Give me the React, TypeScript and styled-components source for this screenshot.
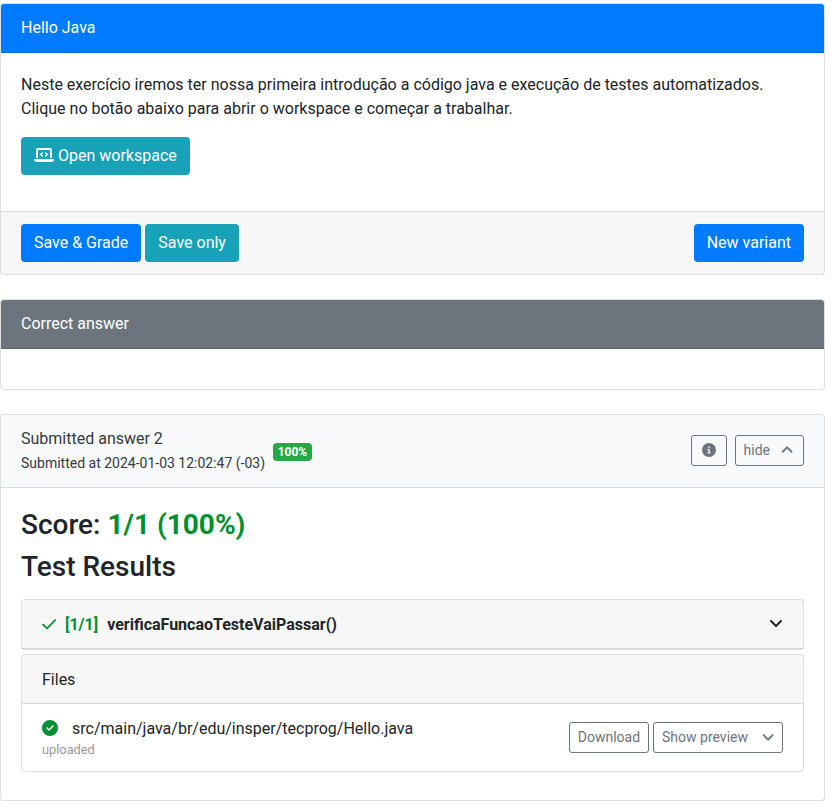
import React from "react";
import styled, { createGlobalStyle } from "styled-components";
import {
  FaAngleDown,
  FaAngleUp,
  FaCircleCheck,
  FaCircleInfo,
  FaLaptopCode,
} from "react-icons/fa6";

const GlobalStyle = createGlobalStyle`
  *, *::before, *::after { box-sizing: border-box; }
  body {
    margin: 0;
    background: #fff;
    color: #212529;
    font: 400 16px/24px Roboto, "Liberation Sans", sans-serif;
  }
`;

const Page = styled.main`
  display: flex;
  flex-direction: column;
  gap: 24px;
  width: 825px;
  padding-top: 3px;
`;

const Card = styled.section`
  border: 1px solid rgba(0, 0, 0, 0.125);
  border-radius: 4px;
  background: #fff;
  background-clip: border-box;
`;

type Tone = "primary" | "secondary" | "light" | "plain";

const headerColors: Record<Tone, { bg: string; fg: string }> = {
  primary: { bg: "#007bff", fg: "#fff" },
  secondary: { bg: "#6c757d", fg: "#fff" },
  light: { bg: "#f8f9fa", fg: "#343a40" },
  plain: { bg: "rgba(0, 0, 0, 0.03)", fg: "#212529" },
};

const CardHeader = styled.header<{ $tone: Tone }>`
  display: flex;
  align-items: center;
  padding: 12px 20px;
  border-bottom: 1px solid rgba(0, 0, 0, 0.125);
  border-radius: 3px 3px 0 0;
  background-color: ${(p) => headerColors[p.$tone].bg};
  color: ${(p) => headerColors[p.$tone].fg};
`;

const PanelHeader = styled(CardHeader)`
  padding: 13px 20px 11px;
`;

const QuestionBody = styled.div`
  padding: 20px 20px 36px;
`;

const Paragraph = styled.p`
  margin: 0 0 16px;
`;

const CardFooter = styled.footer`
  display: flex;
  gap: 4px;
  padding: 12px 20px;
  border-top: 1px solid rgba(0, 0, 0, 0.125);
  background: rgba(0, 0, 0, 0.03);
`;

const Button = styled.button<{ $color: string; $end?: boolean }>`
  display: inline-flex;
  align-items: center;
  gap: 4px;
  height: 38px;
  margin: 0 0 0 ${(p) => (p.$end ? "auto" : "0")};
  padding: 0 13px;
  border: 0;
  border-radius: 4px;
  background: ${(p) => p.$color};
  color: #fff;
  font: inherit;
  white-space: nowrap;
`;

const WorkspaceIcon = styled(FaLaptopCode)`
  width: 20px;
  height: 16px;
  margin-bottom: 2px;
`;

const EmptyBody = styled.div`
  height: 40px;
`;

const Submission = styled.div`
  display: flex;
  flex-direction: column;
`;

const Timestamp = styled.span`
  font-size: 14px;
`;

const Badge = styled.span`
  margin: 2px 0 0 8px;
  padding: 3px 4.6px;
  border-radius: 4px;
  background: #28a745;
  color: #fff;
  font-size: 12px;
  font-weight: 700;
  line-height: 12px;
`;

const Actions = styled.div<{ $gap: number }>`
  display: flex;
  gap: ${(p) => p.$gap}px;
  margin-left: auto;
`;

const HeaderActions = styled(Actions)`
  margin-bottom: 1px;
`;

const OutlineButton = styled.button<{ $gap?: number; $padding?: number; $end?: number }>`
  display: inline-flex;
  align-items: center;
  justify-content: center;
  gap: ${(p) => p.$gap ?? 0}px;
  height: 31px;
  padding: 0 ${(p) => p.$padding ?? 8}px;
  padding-right: ${(p) => p.$end ?? p.$padding ?? 8}px;
  border: 1px solid #6c757d;
  border-radius: 3px;
  background: transparent;
  color: #6c757d;
  font: 400 14px/21px Roboto, "Liberation Sans", sans-serif;
  white-space: nowrap;
`;

const InfoIcon = styled(FaCircleInfo)`
  width: 14px;
  height: 14px;
  margin-bottom: 1px;
`;

const CollapseIcon = styled(FaAngleUp)`
  width: 12.25px;
  height: 14px;
  margin-bottom: 1px;
  stroke-width: 12px;
`;

const PreviewIcon = styled(FaAngleDown)`
  width: 12.25px;
  height: 14px;
  margin-bottom: 2px;
  stroke-width: 12px;
`;

const ResultsBody = styled.div`
  padding: 20px 20px 27.8px;
`;

const Heading = styled.h2<{ $after: number }>`
  margin: 0 0 ${(p) => p.$after}px;
  font-size: 28px;
  font-weight: 500;
  line-height: 33.6px;
`;

const Points = styled.span`
  color: #009030;
  font-weight: 700;
`;

const Panel = styled(Card)`
  & + & {
    margin-top: 4px;
  }
`;

const TestName = styled.strong`
  margin-left: 9px;
  font-weight: 700;
`;

const TestPoints = styled(TestName)`
  color: #009030;
`;

const PassIcon = styled.svg`
  width: 14px;
  height: 16px;
  margin-bottom: 2px;
  color: #009030;
`;

const ExpandIcon = styled(FaAngleDown)`
  width: 14px;
  height: 16px;
  margin: 0 0 4px auto;
`;

const FileRow = styled.div`
  display: flex;
  align-items: center;
  padding: 12px 20px;
`;

const FileName = styled.div`
  display: flex;
  align-items: center;
  gap: 14px;
  margin-bottom: -1px;
  padding-top: 1px;
`;

const UploadedIcon = styled(FaCircleCheck)`
  width: 16px;
  height: 16px;
  margin-bottom: 2px;
  color: #009030;
`;

const FileStatus = styled.div`
  color: #999;
  font-size: 12.8px;
  line-height: 19px;
`;

export default function App() {
  return (
    <>
      <GlobalStyle />
      <Page>
        <Card>
          <CardHeader $tone="primary">Hello Java</CardHeader>
          <QuestionBody>
            <Paragraph>
              Neste exercício iremos ter nossa primeira introdução a código java e execução de
              testes automatizados. Clique no botão abaixo para abrir o workspace e começar a
              trabalhar.
            </Paragraph>
            <Button $color="#17a2b8">
              <WorkspaceIcon />
              Open workspace
            </Button>
          </QuestionBody>
          <CardFooter>
            <Button $color="#007bff">Save &amp; Grade</Button>
            <Button $color="#17a2b8">Save only</Button>
            <Button $color="#007bff" $end>
              New variant
            </Button>
          </CardFooter>
        </Card>

        <Card>
          <CardHeader $tone="secondary">Correct answer</CardHeader>
          <EmptyBody />
        </Card>

        <Card>
          <CardHeader $tone="light">
            <Submission>
              <span>Submitted answer 2</span>
              <Timestamp>Submitted at 2024-01-03 12:02:47 (-03)</Timestamp>
            </Submission>
            <Badge>100%</Badge>
            <HeaderActions $gap={8}>
              <OutlineButton $padding={10} aria-label="Submission info">
                <InfoIcon />
              </OutlineButton>
              <OutlineButton $gap={10.9} $end={9.9}>
                hide
                <CollapseIcon />
              </OutlineButton>
            </HeaderActions>
          </CardHeader>
          <ResultsBody>
            <Heading $after={8}>
              Score: <Points>1/1 (100%)</Points>
            </Heading>
            <Heading $after={16}>Test Results</Heading>
            <Panel>
              <PanelHeader $tone="plain">
                <PassIcon viewBox="0 0 14 16" fill="none" stroke="currentColor">
                  <path
                    d="M1 8.6 5 12.4 13.2 4.2"
                    strokeWidth="1.75"
                    strokeLinecap="round"
                    strokeLinejoin="round"
                  />
                </PassIcon>
                <TestPoints>[1/1]</TestPoints>
                <TestName>verificaFuncaoTesteVaiPassar()</TestName>
                <ExpandIcon />
              </PanelHeader>
            </Panel>
            <Panel>
              <PanelHeader $tone="plain">Files</PanelHeader>
              <FileRow>
                <div>
                  <FileName>
                    <UploadedIcon />
                    src/main/java/br/edu/insper/tecprog/Hello.java
                  </FileName>
                  <FileStatus>uploaded</FileStatus>
                </div>
                <Actions $gap={4}>
                  <OutlineButton>Download</OutlineButton>
                  <OutlineButton $gap={13.75}>
                    Show preview
                    <PreviewIcon />
                  </OutlineButton>
                </Actions>
              </FileRow>
            </Panel>
          </ResultsBody>
        </Card>
      </Page>
    </>
  );
}
